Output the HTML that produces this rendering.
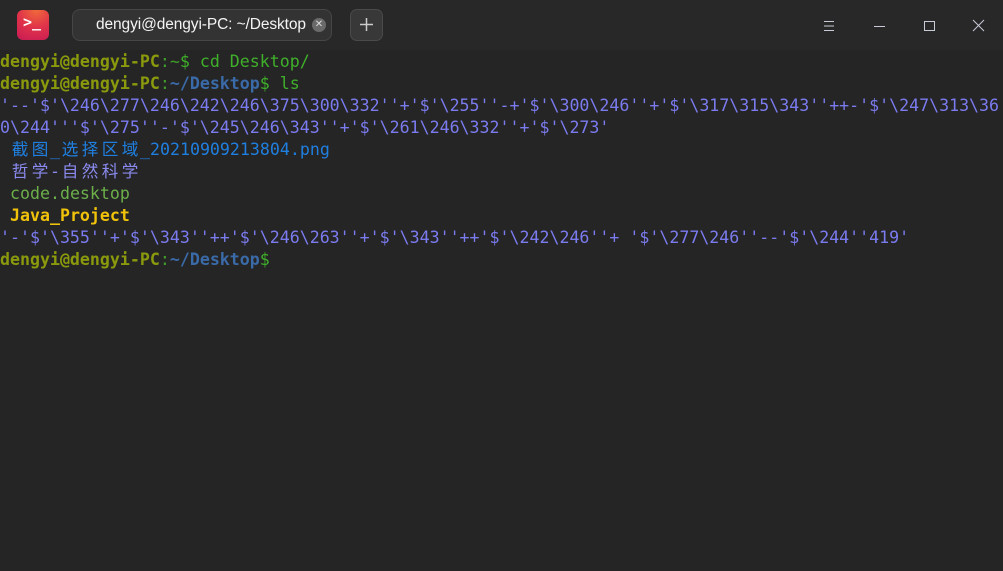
<!DOCTYPE html>
<html><head><meta charset="utf-8"><style>
html,body{margin:0;padding:0;width:1003px;height:571px;overflow:hidden;background:#252525;}
.title{position:absolute;left:0;top:0;width:1003px;height:50px;background:#282828;}
.icon{position:absolute;left:17px;top:10px;width:32px;height:30px;border-radius:6px;background:radial-gradient(circle at 60% 0%,#f06a3a,#e0334a 50%,#c81a55);}
.icon span{position:absolute;left:6px;top:3px;color:#fff;font:bold 15px "DejaVu Sans Mono",monospace;}
.tab{position:absolute;left:72px;top:9px;width:260px;height:32px;border:1px solid #464646;border-radius:8px;background:#333;box-sizing:border-box;}
.tab .t{position:absolute;left:23px;top:6px;color:#f4f4f4;font:15.5px "Liberation Sans",sans-serif;white-space:nowrap;letter-spacing:-0.1px;}
.tab .x{position:absolute;left:239px;top:8px;width:14px;height:14px;border-radius:7px;background:#6a6a6a;color:#ddd;font:10px sans-serif;text-align:center;line-height:14px;}
.plus{position:absolute;left:350px;top:9px;width:33px;height:32px;border:1px solid #4a4a4a;border-radius:7px;background:#383838;box-sizing:border-box;}
.term{position:absolute;left:0;top:51px;font-family:"DejaVu Sans Mono","Liberation Mono","Noto Sans CJK SC",monospace;font-size:16.6px;line-height:22px;white-space:pre;color:#7b7bf0;}
.u{color:#8a9a0c;font-weight:bold}.c{color:#3fa02a}.p{color:#3a6aa8;font-weight:bold}.g{color:#3fb02a}
.f{color:#1f7fe0}.d{color:#8a8af0}.k{color:#6cb04a}.j{color:#f0c20a;font-weight:bold}
.z{display:inline-block;width:20px;text-align:center}
</style></head><body>
<div class="title">
<div class="icon"><span>&gt;_</span></div>
<div class="tab"><div class="t">dengyi@dengyi-PC: ~/Desktop</div><div class="x">✕</div></div>
<div class="plus"><svg width="33" height="31" style="position:absolute;left:-1px;top:-1px"><path d="M16.5 9v13M10 15.5h13" stroke="#ccc" stroke-width="1.5"/></svg></div>
<svg width="223" height="50" style="position:absolute;left:780px;top:0">
<path d="M44 21.5h10M44 26h10M44 30.5h10" stroke="#c8cbd8" stroke-width="1"/>
<path d="M94 26.5h11" stroke="#c8cbd8" stroke-width="1"/>
<rect x="144.5" y="21.5" width="10" height="9" fill="none" stroke="#c8cbd8" stroke-width="1"/>
<path d="M193 20l11 11M204 20l-11 11" stroke="#c8cbd8" stroke-width="1"/>
</svg>
</div>
<div class="term"><span class="u">dengyi@dengyi-PC</span><span class="c">:~</span><span class="g">$ cd Desktop/</span>
<span class="u">dengyi@dengyi-PC</span><span class="c">:</span><span class="p">~/Desktop</span><span class="g">$ ls</span>
'--'$'\246\277\246\242\246\375\300\332''+'$'\255''-+'$'\300\246''+'$'\317\315\343''++-'$'\247\313\36
0\244'''$'\275''-'$'\245\246\343''+'$'\261\246\332''+'$'\273'
 <span class="f"><span class="z">截</span><span class="z">图</span>_<span class="z">选</span><span class="z">择</span><span class="z">区</span><span class="z">域</span>_20210909213804.png</span>
 <span class="d"><span class="z">哲</span><span class="z">学</span>-<span class="z">自</span><span class="z">然</span><span class="z">科</span><span class="z">学</span></span>
 <span class="k">code.desktop</span>
 <span class="j">Java_Project</span>
'-'$'\355''+'$'\343''++'$'\246\263''+'$'\343''++'$'\242\246''+ '$'\277\246''--'$'\244''419'
<span class="u">dengyi@dengyi-PC</span><span class="c">:</span><span class="p">~/Desktop</span><span class="g">$</span></div>
</body></html>
